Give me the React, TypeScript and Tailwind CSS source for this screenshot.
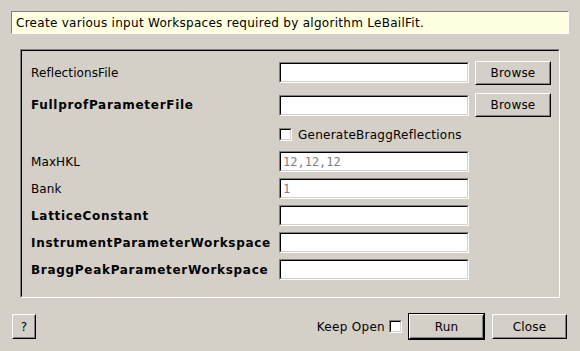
import React from "react";

const ROWS = [
	{ label: "ReflectionsFile", bold: false, browse: true, value: "", h: "h-[33px]" },
	{ label: "FullprofParameterFile", bold: true, browse: true, value: "", h: "h-[32px]" },
	{ label: "", bold: false, check: true, value: "", h: "h-[27px]" },
	{ label: "MaxHKL", bold: false, value: "12,12,12", h: "h-[27px]" },
	{ label: "Bank", bold: false, value: "1", h: "h-[27px]" },
	{ label: "LatticeConstant", bold: true, value: "", h: "h-[27px]" },
	{ label: "InstrumentParameterWorkspace", bold: true, value: "", h: "h-[27px]" },
	{ label: "BraggPeakParameterWorkspace", bold: true, value: "", h: "h-[27px]" },
];

function Sunken({ className, children }: { className?: string; children?: React.ReactNode }) {
	return (
		<div className={"border border-t-[#808080] border-l-[#808080] border-b-white border-r-white " + (className ?? "")}>
			<div className="w-full h-full border border-t-black border-l-black border-b-[#d4d0c8] border-r-[#d4d0c8] bg-white flex items-center">
				{children}
			</div>
		</div>
	);
}

function Button({ label, className, isDefault }: { label: string; className?: string; isDefault?: boolean }) {
	const inner = (
		<div className="w-full h-full border border-t-white border-l-white border-b-black border-r-black">
			<div className="w-full h-full border border-t-[#d4d0c8] border-l-[#d4d0c8] border-b-[#808080] border-r-[#808080] flex items-center justify-center text-black tracking-[0.2px]">
				{label}
			</div>
		</div>
	);
	if (isDefault) {
		return <div className={"border border-black " + (className ?? "")}>{inner}</div>;
	}
	return <div className={className}>{inner}</div>;
}

function Check({ className }: { className?: string }) {
	return <Sunken className={"w-[13px] h-[13px] " + (className ?? "")} />;
}

export default function App() {
	return (
		<div
			className="w-[580px] h-[351px] bg-[#d4d0c8] text-[12px] text-black flex flex-col overflow-hidden"
			style={{ fontFamily: '"DejaVu Sans", sans-serif' }}
		>
			<div className="mt-[11px] mx-[11px] h-[23px] bg-[#ffffe1] border border-t-[#808080] border-l-[#808080] border-b-white border-r-white flex items-center pl-[4px] tracking-[0.28px]">
				Create various input Workspaces required by algorithm LeBailFit.
			</div>

			<div className="mt-[15px] ml-[20px] w-[540px] h-[249px] border border-t-[#808080] border-l-[#808080] border-b-white border-r-white">
				<div className="w-full h-full border border-t-black border-l-black border-b-[#d4d0c8] border-r-[#d4d0c8] pt-[5px] pl-[9px] flex flex-col">
					{ROWS.map((r, i) => (
						<div key={i} className={"flex flex-row items-center " + r.h}>
							<div className={"w-[248px] " + (r.bold ? "font-bold tracking-[0.7px]" : "tracking-[0.1px]")}>
								{r.label}
							</div>
							{r.check ? (
								<div className="flex flex-row items-center">
									<Check />
									<span className="ml-[6px] tracking-[0.25px]">GenerateBraggReflections</span>
								</div>
							) : (
								<Sunken className="w-[190px] h-[21px]">
									<span
										className="pl-[2px] text-[#808080] text-[12px]"
										style={{ fontFamily: '"DejaVu Sans Mono", monospace' }}
									>
										{r.value}
									</span>
								</Sunken>
							)}
							{r.browse && <Button label="Browse" className="ml-[6px] w-[76px] h-[24px]" />}
						</div>
					))}
				</div>
			</div>

			<div className="mt-[15px] flex flex-row items-center h-[27px] pl-[12px] pr-[13px]">
				<Button label="?" className="w-[24px] h-[25px]" />
				<div className="flex-1" />
				<span className="tracking-[0.3px]">Keep Open</span>
				<Check className="ml-[4px]" />
				<Button label="Run" className="ml-[6px] w-[77px] h-[27px]" isDefault />
				<Button label="Close" className="ml-[7px] w-[75px] h-[25px]" />
			</div>
		</div>
	);
}
